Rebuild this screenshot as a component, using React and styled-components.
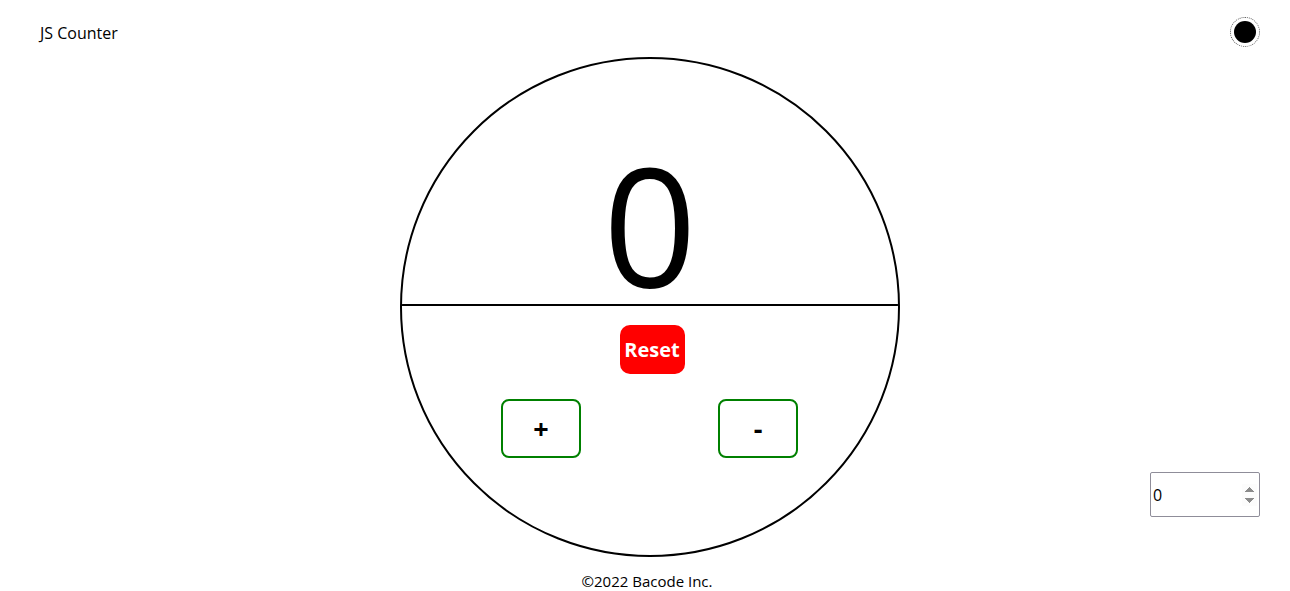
import React, { useState } from "react";
import styled, { createGlobalStyle } from "styled-components";

const GlobalStyle = createGlobalStyle`
  html, body {
    margin: 0;
    padding: 0;
    background: #fff;
    color: #000;
    font-family: "Open Sans", "Noto Sans", sans-serif;
  }
`;

const Page = styled.div`
  height: 591px;
  display: flex;
  flex-direction: column;
  overflow: hidden;
`;

const Header = styled.header`
  height: 57px;
  display: flex;
  align-items: center;
  justify-content: space-between;
  padding: 0 30px 0 40px;
  box-sizing: border-box;
`;

const Title = styled.span`
  font-size: 16px;
  margin-top: 8px;
`;

const Toggle = styled.button`
  width: 30px;
  height: 30px;
  margin-top: 6px;
  padding: 0;
  border: 1px dotted #555;
  border-radius: 50%;
  background: #fff;
  display: flex;
  align-items: center;
  justify-content: center;
  cursor: pointer;

  &::after {
    content: "";
    width: 22px;
    height: 22px;
    border-radius: 50%;
    background: #000;
  }
`;

const Main = styled.main`
  display: grid;
  grid-template-columns: 400px 500px 1fr;
`;

const Circle = styled.div`
  grid-column: 2;
  width: 500px;
  height: 500px;
  box-sizing: border-box;
  border: 2px solid #000;
  border-radius: 50%;
  overflow: hidden;
  display: flex;
  flex-direction: column;
`;

const Display = styled.div`
  height: 245px;
  flex-shrink: 0;
  border-bottom: 2px solid #000;
  display: flex;
  align-items: flex-end;
  justify-content: center;
`;

const Count = styled.span`
  font-size: 164px;
  line-height: 1;
  margin-bottom: -2px;
`;

const Controls = styled.div`
  display: flex;
  flex-direction: column;
  align-items: center;
  padding-top: 19px;
`;

const ResetButton = styled.button`
  width: 65px;
  height: 49px;
  margin-left: 4px;
  border: none;
  border-radius: 10px;
  background: #ff0000;
  color: #fff;
  font-family: inherit;
  font-size: 20px;
  font-weight: 700;
  padding: 0;
  cursor: pointer;
`;

const StepRow = styled.div`
  margin-top: 25px;
  display: flex;
  gap: 137px;
  margin-left: -1px;
`;

const StepButton = styled.button`
  width: 80px;
  height: 59px;
  box-sizing: border-box;
  border: 2px solid green;
  border-radius: 8px;
  background: #fff;
  color: #000;
  font-family: inherit;
  font-size: 27px;
  font-weight: 700;
  padding: 0;
  cursor: pointer;
`;

const Side = styled.div`
  grid-column: 3;
  display: flex;
  align-items: flex-end;
  justify-content: flex-end;
  padding: 0 30px 40px 0;
`;

const StepInput = styled.input`
  width: 110px;
  height: 45px;
  box-sizing: border-box;
  border: 1px solid #8f8d99;
  border-radius: 2px;
  padding: 0 2px;
  font-family: inherit;
  font-size: 16px;
  color: #000;

  &::-webkit-inner-spin-button {
    opacity: 1;
  }
`;

const Footer = styled.footer`
  text-align: center;
  font-size: 15px;
  margin-top: 14px;
  padding-left: 4px;
`;

export default function App() {
  const [count, setCount] = useState(0);
  const [step, setStep] = useState(0);
  const n = Number(step) || 1;

  return (
    <Page>
      <GlobalStyle />
      <Header>
        <Title>JS Counter</Title>
        <Toggle aria-label="Toggle theme" />
      </Header>
      <Main>
        <Circle>
          <Display>
            <Count>{count}</Count>
          </Display>
          <Controls>
            <ResetButton onClick={() => setCount(0)}>Reset</ResetButton>
            <StepRow>
              <StepButton onClick={() => setCount((c) => c + n)}>+</StepButton>
              <StepButton onClick={() => setCount((c) => c - n)}>-</StepButton>
            </StepRow>
          </Controls>
        </Circle>
        <Side>
          <StepInput
            type="number"
            value={step}
            onChange={(e) => setStep(e.target.value)}
          />
        </Side>
      </Main>
      <Footer>©2022 Bacode Inc.</Footer>
    </Page>
  );
}
